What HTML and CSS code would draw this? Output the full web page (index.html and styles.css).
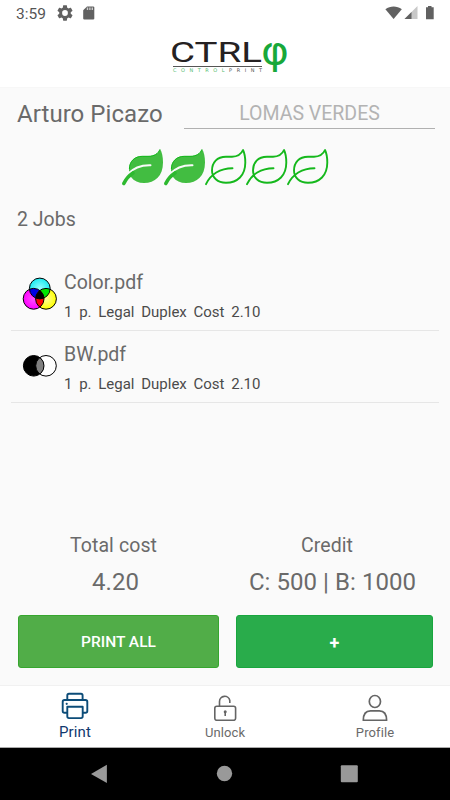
FILE: index.html
```html
<!DOCTYPE html>
<html lang="en">
<head>
<meta charset="utf-8">
<title>Print</title>
<link rel="stylesheet" href="styles.css">
</head>
<body>
<svg class="defs" width="0" height="0">
  <symbol id="leaf-full" viewBox="0 0 43 38">
    <path d="M39 1C37.500 5.500 33 8.200 27 8H21.500C13 8 8 13.500 8 22.500L10 29C13 33 17.500 35 23 35C34 35 42 28 42 14.500C42 9 41 4 39 1Z" fill="#42bd41"/>
    <path d="M38.800 1.500C37.500 5.500 33 8.500 27 8.300H21.500C13.500 8.300 8.300 13.500 8.400 21" fill="none" stroke="#13b71b"/>
    <path d="M29.500 17.300C20 17 12 20.500 6.500 26.300" fill="none" stroke="#fafafa" stroke-width="2" stroke-linecap="round"/>
    <path d="M2.800 35.500C5 31 8 27.500 12 25" fill="none" stroke="#2db92f" stroke-width="3.600" stroke-linecap="round"/>
  </symbol>
  <symbol id="leaf-line" viewBox="0 0 43 38">
    <path d="M39 2C37.200 6.200 33.500 8.700 28 8.700H22C13 8.700 8 14.500 8 22.500C8 29.500 13.500 34.700 22 34.700C33.500 34.700 41.300 27.500 41.300 14.500C41.300 9 40.200 4.500 39 2ZM28.500 20.200C16 20.200 6.500 26.500 2 36.200" fill="none" stroke="#15b81c" stroke-width="1.900" stroke-linecap="round" stroke-linejoin="round"/>
  </symbol>
</svg>
<div class="screen">
  <div class="status">
    <span class="clock">3:59</span>
    <svg class="gear" width="16" height="16" viewBox="2 2 20 20"><path fill="#616161" d="M19.140 12.940c.04-.3.060-.61.060-.94 0-.32-.02-.64-.07-.94l2.030-1.580c.18-.14.230-.41.120-.61l-1.920-3.320c-.12-.22-.37-.29-.59-.22l-2.390.96c-.5-.38-1.030-.7-1.620-.94L14.400 2.810c-.04-.24-.24-.41-.48-.41h-3.840c-.24 0-.43.170-.47.410L9.250 5.350C8.660 5.590 8.120 5.920 7.630 6.290L5.240 5.330c-.22-.08-.47 0-.59.220L2.740 8.870c-.12.210-.08.470.12.610l2.030 1.580c-.05.300-.09.630-.09.940s.02.640.070.940l-2.030 1.580c-.18.140-.23.410-.12.610l1.920 3.320c.12.220.37.290.59.220l2.390-.96c.5.380 1.030.7 1.620.94l.36 2.540c.05.240.240.410.480.410h3.840c.24 0 .44-.17.470-.41l.36-2.540c.59-.24 1.130-.56 1.620-.94l2.390.96c.22.080.470 0 .59-.22l1.920-3.320c.12-.22.070-.47-.12-.61zM12 15.600A3.600 3.600 0 1 1 12 8.400a3.600 3.600 0 0 1 0 7.200z"/></svg>
    <svg class="card" width="12" height="14" viewBox="0 0 12 14"><path fill="#616161" d="M4 .4h6.200Q11.300.400 11.300 1.500V12.500Q11.300 13.600 10.200 13.600H1.300Q.2 13.600.2 12.500V4.200z"/><path d="M4.500 1.500v2.500M6.900 1.500v2.500M9.300 1.500v2.500" stroke="#ccc" stroke-width="1.400"/></svg>
    <svg class="signals" width="50" height="16" viewBox="0 0 50 16"><path fill="#616161" d="M.4 4.300C5.200.700 12 .700 16.800 4.300L8.600 14z"/><path fill="#c8c8c8" d="M32.500 1v13h-13z"/><path fill="#616161" d="M26.500 7v7h-7z"/><path fill="#616161" d="M43 1h3.500v1.200h2.200v12H41V2.200h2z"/></svg>
  </div>
  <header class="header">
    <svg width="120" height="59" viewBox="0 -10 120 59">
      <text class="brand" x="0" y="24" textLength="92" lengthAdjust="spacingAndGlyphs">CTRL</text>
      <text class="phi" x="91" y="25.500" textLength="28" lengthAdjust="spacingAndGlyphs">φ</text>
      <path d="M3 28.500h89" stroke="#555"/>
      <text class="tag" x="3" y="34.200" textLength="89"><tspan fill="#55bd70">CONTROL</tspan><tspan fill="#555">PRINT</tspan></text>
    </svg>
  </header>
  <main class="main">
    <div class="account">
      <div class="name">Arturo Picazo</div>
      <div class="branch">LOMAS VERDES</div>
    </div>
    <div class="rating">
      <svg><use href="#leaf-full"/></svg><svg><use href="#leaf-full"/></svg><svg><use href="#leaf-line"/></svg><svg><use href="#leaf-line"/></svg><svg><use href="#leaf-line"/></svg>
    </div>
    <div class="count">2 Jobs</div>
    <div class="jobs">
      <div class="job">
        <svg class="ink" width="36" height="34" viewBox="0 0 36 34">
          <defs>
            <radialGradient id="gc"><stop offset="0" stop-color="#9ff"/><stop offset="1" stop-color="#19eaf0"/></radialGradient>
            <radialGradient id="gy"><stop offset="0" stop-color="#ffffa0"/><stop offset="1" stop-color="#ff0"/></radialGradient>
            <radialGradient id="gm"><stop offset="0" stop-color="#ff50ff"/><stop offset="1" stop-color="#f0f"/></radialGradient>
            <clipPath id="cc"><circle cx="17.800" cy="11.500" r="10.400"/></clipPath>
            <clipPath id="cm"><circle cx="11.600" cy="21.800" r="10.400"/></clipPath>
          </defs>
          <circle cx="17.800" cy="11.500" r="10.400" fill="url(#gc)"/><circle cx="11.600" cy="21.800" r="10.400" fill="url(#gm)"/><circle cx="24" cy="21.800" r="10.400" fill="url(#gy)"/>
          <g clip-path="url(#cc)"><circle cx="11.600" cy="21.800" r="10.400" fill="#0000e6"/><circle cx="24" cy="21.800" r="10.400" fill="#00e600"/></g>
          <g clip-path="url(#cm)"><circle cx="24" cy="21.800" r="10.400" fill="#f00"/><g clip-path="url(#cc)"><circle cx="24" cy="21.800" r="10.400"/></g></g>
          <g fill="none" stroke="#000"><circle cx="17.800" cy="11.500" r="10.400"/><circle cx="11.600" cy="21.800" r="10.400"/><circle cx="24" cy="21.800" r="10.400"/></g>
        </svg>
        <div><div class="file">Color.pdf</div><div class="meta">1 p. Legal Duplex Cost 2.10</div></div>
      </div>
      <div class="job">
        <svg class="ink" width="36" height="34" viewBox="0 0 36 34">
          <clipPath id="ck"><circle cx="11.700" cy="16.800" r="10.300"/></clipPath>
          <circle cx="24" cy="16.800" r="10.300" fill="#fff"/><circle cx="11.700" cy="16.800" r="10.300"/>
          <circle cx="24" cy="16.800" r="10.300" fill="#808080" clip-path="url(#ck)"/>
          <g fill="none" stroke="#000"><circle cx="11.700" cy="16.800" r="10.300"/><circle cx="24" cy="16.800" r="10.300"/></g>
        </svg>
        <div><div class="file">BW.pdf</div><div class="meta">1 p. Legal Duplex Cost 2.10</div></div>
      </div>
    </div>
    <div class="summary">
      <section class="total">
        <div class="label">Total cost</div>
        <div class="value">4.20</div>
        <button class="btn">PRINT ALL</button>
      </section>
      <section class="credit">
        <div class="label">Credit</div>
        <div class="value">C: 500 | B: 1000</div>
        <button class="btn add">+</button>
      </section>
    </div>
  </main>
  <nav class="tabs">
    <a class="tab active">
      <svg width="30" height="30" viewBox="0 .7 30 30" fill="none" stroke="#0c4c78" stroke-width="1.900" stroke-linejoin="round"><path d="M7.300 9.500V5.300Q7.300 3.500 9 3.500H21Q22.600 3.500 22.600 5.300V9.500M7 22.500H4.500Q2.700 22.500 2.700 20.700V11.500Q2.700 9.700 4.500 9.700H25.500Q27.300 9.700 27.300 11.500V20.700Q27.300 22.500 25.500 22.500H23M7.300 16.500H22.700V26Q22.700 27.800 21 27.800H9Q7.300 27.800 7.300 26Z"/><circle cx="6.700" cy="13.500" r=".5" stroke-width="1.200"/></svg>
      <span>Print</span>
    </a>
    <a class="tab">
      <svg width="30" height="30" viewBox="0 0 30 30" fill="none" stroke="#656565" stroke-width="1.600"><rect x="4.800" y="15.300" width="20.800" height="14" rx="2"/><path d="M9.500 15V10.500A5.200 5.200 0 0 1 19.800 9.500V12"/><circle cx="15.200" cy="20.800" r="1.500" fill="#656565" stroke="none"/><path d="M15.200 20V25"/></svg>
      <span>Unlock</span>
    </a>
    <a class="tab">
      <svg width="30" height="30" viewBox="0 0 30 30" fill="none" stroke="#656565" stroke-width="1.700" stroke-linejoin="round"><ellipse cx="14.900" cy="10.500" rx="5.600" ry="6"/><path d="M3.300 29.300C3.300 22.500 6.500 19.800 10.500 19.800H19.300C23.500 19.800 26.600 22.500 26.600 29.300Z"/></svg>
      <span>Profile</span>
    </a>
  </nav>
  <div class="sysnav">
    <svg width="18" height="20" viewBox="0 0 18 20"><path fill="#999" d="M16.900.7v18.300L1 9.900z"/></svg>
    <svg width="18" height="20" viewBox="0 0 18 20"><circle cx="9.500" cy="9.500" r="7.700" fill="#999"/></svg>
    <svg width="18" height="20" viewBox="0 0 18 20"><rect x=".8" y="1.300" width="17" height="17" rx="1" fill="#999"/></svg>
  </div>
</div>
</body>
</html>
```
FILE: styles.css
```css
* { box-sizing: border-box; }
body { margin: 0; font-family: Roboto, "Liberation Sans", sans-serif; color: #6a6a6a; }
svg { display: block; flex: none; }
.defs { position: absolute; }
.screen { width: 450px; height: 800px; display: flex; flex-direction: column; background: #fafafa; overflow: hidden; white-space: nowrap; }
.status { height: 28px; background: #fff; display: flex; align-items: center; padding: 0 15px 2px 16px; }
.clock { font-size: 15.500px; color: #555; width: 41px; line-height: 26px; padding-top: 2px; }
.card { margin-left: 10px; }
.signals { margin-left: auto; }
.header { height: 60px; background: #fff; display: flex; justify-content: center; padding-left: 10px; border-bottom: 1px solid #f7f7f7; }
.brand { font-family: Roboto, sans-serif; font-size: 27.500px; font-weight: 400; fill: #252122; }
.phi { font-family: "DejaVu Sans", sans-serif; font-size: 39.500px; fill: #18a83a; }
.tag { font-family: "DejaVu Sans", sans-serif; font-size: 5px; }
.main { height: 597px; display: flex; flex-direction: column; }
.account { display: flex; justify-content: space-between; height: 41px; padding: 9px 15px 0 17px; }
.name { font-size: 24px; line-height: 34px; letter-spacing: .05px; }
.branch { width: 251px; height: 32px; border-bottom: 1px solid #b0b0b0; text-align: center; font-size: 19.500px; line-height: 33px; color: #b3b3b3; }
.rating { display: flex; justify-content: center; margin-top: 19px; height: 38px; padding-right: 1px; }
.rating svg { width: 43px; height: 38px; margin-right: -1.800px; }
.count { margin: 21px 0 0 17px; font-size: 19.500px; line-height: 26px; }
.jobs { margin: 26px 11px 0 11px; }
.job { height: 72px; border-bottom: 1px solid #e6e6e6; display: flex; padding: 9px 0 0 11px; }
.ink { margin: 9px 6px 0 0; width: 36px; }
.file { font-size: 19.500px; line-height: 30px; }
.meta { font-size: 15px; line-height: 20px; margin-top: 4px; color: #4b4b4b; word-spacing: 3px; }
.summary { display: flex; gap: 17px; margin-top: auto; padding: 0 17px 17px 18px; text-align: center; }
.total { width: 201px; }
.credit { width: 197px; }
.label { font-size: 19.500px; line-height: 26px; letter-spacing: .1px; }
.total .label { padding-right: 10px; }
.total .value { padding-right: 6px; }
.credit .label { padding-right: 15px; }
.credit .value { padding-right: 4px; }
.value { font-size: 24px; line-height: 32px; margin-top: 7px; letter-spacing: .05px; }
.btn { display: block; width: 100%; height: 53px; margin-top: 17px; padding: 2px 0 0; border: 1px solid #36a62e; border-radius: 3px; background: #51ad48; color: #fff; font: 500 15.500px/49px Roboto, sans-serif; }
.btn.add { background: #29ac4b; border-color: #18a63e; font-weight: 700; font-size: 18px; }
.tabs { height: 63px; display: flex; background: #fff; border-top: 1px solid #f1f1f1; border-bottom: 1px solid #aaa; }
.tab { flex: 1; display: flex; flex-direction: column; align-items: center; padding-top: 5px; font-size: 13px; color: #6a6a6a; }
.tab span { line-height: 18px; margin-top: 3px; letter-spacing: .1px; }
.tab.active { color: #10386e; font-size: 15px; }
.tab.active span { margin-top: 2px; }
.sysnav { height: 52px; background: #000; display: flex; justify-content: space-between; padding: 16px 92px 0 90px; }
```
